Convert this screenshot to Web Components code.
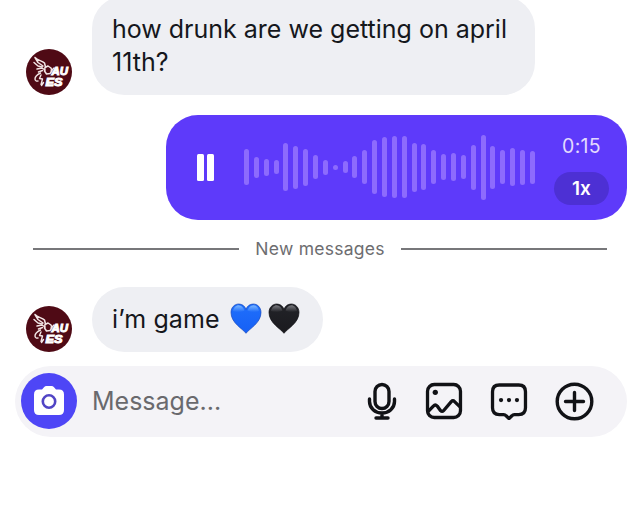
<!DOCTYPE html>
<html lang="en">
<head>
<meta charset="utf-8">
<title>Chat</title>
<style>
    html, body {
        margin: 0;
        height: 100%;
        overflow: hidden;
        background: #fff;
    }
    body {
        font-family: Inter, "Liberation Sans", sans-serif;
        color: #15171c;
    }
</style>
</head>
<body>
<chat-thread>
    <chat-message>how drunk are we getting on april<br>11th?</chat-message>
    <voice-message time="0:15" speed="1x"></voice-message>
    <thread-divider>New messages</thread-divider>
    <chat-message compact>i’m game <heart-emoji color="blue"></heart-emoji><heart-emoji color="black"></heart-emoji></chat-message>
    <message-composer slot="composer" placeholder="Message..."></message-composer>
</chat-thread>

<script>
/**
 * Attach an open shadow root filled with the given markup
 */
function render(element, html) {
    const template = document.createElement('template');
    template.innerHTML = html;
    element.attachShadow({ mode: 'open' });
    element.shadowRoot.appendChild(template.content.cloneNode(true));
}

class ChatThread extends HTMLElement {
    constructor() {
        super();
        render(this, `
<style>
    :host {
        display: flex;
        flex-direction: column;
        width: 640px;
        height: 506px;
    }
    .messages {
        display: flex;
        flex-direction: column;
        /* the first bubble is scrolled slightly out of view */
        margin-top: -4px;
    }
</style>
<div class="messages"><slot></slot></div>
<slot name="composer"></slot>`);
    }
}

class UserAvatar extends HTMLElement {
    constructor() {
        super();
        render(this, `
<style>
    :host { display: block; width: 46px; height: 46px; }
    svg { display: block; }
    text {
        font: italic bold 10px "Liberation Sans", sans-serif;
        fill: #fff;
        stroke: #fff;
        stroke-width: .9px;
    }
</style>
<svg width="46" height="46" viewBox="0 0 46 46">
    <circle cx="23" cy="23" r="23" fill="#4f0a15"/>
    <g fill="none" stroke="#f3e6e6" stroke-linecap="round" stroke-linejoin="round">
        <path d="M9 8.500l3 5 5 3.500M9 8.500c2.500 3 7 3 9.500 5.500l1 4M8 13.500l4 3.500 4 1" stroke-width="1.500"/>
        <path d="M11 20l5-1 3 2M12.500 23l4-1.500" stroke-width="1.500"/>
        <path d="M14.500 24c-3 1.500-5.500 3-5.500 6 0 1.500 1.500 2.500 3 2M15 26l-1.500 3.500 3 .5-1.500 5.500M17.500 33.500l-2 3" stroke-width="1.400"/>
        <path d="M19 18.500l3-1.500 3 2 1 3-2 2.500-3.500.5-2-3z" stroke-width="1.500"/>
        <path d="M25 22l3-3" stroke-width="1.500"/>
    </g>
    <text x="25.500" y="26.300" textLength="16.500" lengthAdjust="spacingAndGlyphs">AU</text>
    <text x="19.500" y="37" textLength="17" lengthAdjust="spacingAndGlyphs">ES</text>
</svg>`);
    }
}

class ChatMessage extends HTMLElement {
    constructor() {
        super();
        render(this, `
<style>
    :host {
        display: flex;
        align-items: flex-end;
        padding-left: 26px;
        gap: 20px;
    }
    .bubble {
        box-sizing: border-box;
        padding: 16.500px 28px 16.500px 20px;
        border-radius: 32.500px;
        background: #eeeff3;
        font-size: 25px;
        line-height: 33px;
        white-space: nowrap;
    }
    :host([compact]) .bubble {
        height: 65px;
        padding: 15.500px 23px 15.500px 20px;
        letter-spacing: .1px;
    }
</style>
<user-avatar></user-avatar>
<div class="bubble"><slot></slot></div>`);
    }
}

class HeartEmoji extends HTMLElement {
    constructor() {
        super();
        const colors = this.getAttribute('color') === 'blue'
            ? ['#1f6ffb', '#1660f5', '#1648bd', '#7db8ff']
            : ['#222328', '#1a1a1e', '#0c0c10', '#7b7c81'];
        render(this, `
<style>
    :host { display: inline-block; width: 32px; height: 31px; margin-left: 3px; margin-right: 3px; vertical-align: -6px; }
    :host(:last-child) { margin-right: 0; }
    svg { display: block; }
</style>
<svg width="32" height="31" viewBox="0 0 32 31">
    <defs>
        <linearGradient id="body" x2="0" y2="1">
            <stop offset="0" stop-color="${colors[0]}"/>
            <stop offset="1" stop-color="${colors[1]}"/>
        </linearGradient>
        <linearGradient id="gloss" x2="0" y2="1">
            <stop offset="0" stop-color="${colors[3]}"/>
            <stop offset="1" stop-color="${colors[3]}" stop-opacity="0"/>
        </linearGradient>
    </defs>
    <path d="M16 30.300C12.500 25.500 1 20 1 9.500 1 4.500 4.500 1 8.700 1c3.600 0 6.300 2.200 7.300 5.500C17 3.200 19.700 1 23.300 1 27.500 1 31 4.500 31 9.500 31 20 19.500 25.500 16 30.300z" fill="url(#body)" stroke="${colors[2]}" stroke-width=".7"/>
    <path d="M3 8c.5-3.500 3-5.800 5.700-5.800S13.500 4.500 14.500 7.500C11 9.500 6 9.500 3 8zM17.500 7.500c1-3 3.100-5.300 5.800-5.300S28.500 4.500 29 8c-3 1.500-8 1.500-11.500-.5z" fill="url(#gloss)"/>
</svg>`);
    }
}

// bar heights of the recorded waveform, left to right
const WAVEFORM = [
    36, 21, 17, 14, 48, 43, 37, 24, 15, 5,
    12, 22, 34, 54, 60, 62, 62, 49, 46, 34,
    26, 28, 24, 45, 65, 43, 34, 38, 35, 33
];

class VoiceMessage extends HTMLElement {
    constructor() {
        super();
        const bars = WAVEFORM.map(height => `<i style="height: ${height}px"></i>`).join('');
        render(this, `
<style>
    :host {
        display: flex;
        align-items: center;
        align-self: flex-end;
        box-sizing: border-box;
        width: 461px;
        height: 105px;
        margin: 19.500px 13px 0 0;
        padding: 0 18px 0 31px;
        border-radius: 32px;
        background: #5e3afa;
        color: #fff;
    }
    .pause { display: flex; gap: 3px; width: 47px; }
    .pause i { width: 7px; height: 27px; border-radius: 1.500px; background: #fff; }
    .wave {
        display: flex;
        align-items: center;
        justify-content: space-between;
        width: 291px;
        height: 66px;
    }
    .wave i { width: 5px; border-radius: 2.500px; background: #8d6bfd; }
    .meta {
        display: flex;
        flex-direction: column;
        align-items: center;
        gap: 14px;
        margin-left: auto;
        padding-top: 4px;
    }
    .time { font-size: 19.500px; line-height: 24px; color: #e3dafe; letter-spacing: .3px; }
    .speed {
        width: 55px;
        height: 33px;
        border-radius: 17px;
        background: #4d30d4;
        font-size: 19px;
        font-weight: 600;
        line-height: 34px;
        text-align: center;
    }
</style>
<div class="pause"><i></i><i></i></div>
<div class="wave">${bars}</div>
<div class="meta">
    <span class="time">${this.getAttribute('time')}</span>
    <span class="speed">${this.getAttribute('speed')}</span>
</div>`);
    }
}

class ThreadDivider extends HTMLElement {
    constructor() {
        super();
        render(this, `
<style>
    :host {
        display: flex;
        align-items: center;
        justify-content: space-between;
        height: 24px;
        margin: 17px 33px 26.500px;
        font-size: 17.500px;
        color: #6d6d70;
        letter-spacing: .25px;
    }
    hr { width: 206px; height: 2px; margin: 0; border: 0; background: #77777a; }
</style>
<hr><slot></slot><hr>`);
    }
}

class MessageComposer extends HTMLElement {
    constructor() {
        super();
        render(this, `
<style>
    :host {
        display: flex;
        align-items: center;
        box-sizing: border-box;
        height: 71px;
        margin: 13.500px 13px 0 15px;
        padding: 0 33.500px 0 6px;
        border-radius: 35.500px;
        background: #f4f3f7;
    }
    .camera {
        display: flex;
        align-items: center;
        justify-content: center;
        width: 56px;
        height: 56px;
        border-radius: 50%;
        background: #4e46f6;
    }
    .placeholder { margin-left: 15px; font-size: 25px; color: #69696d; }
    .actions { display: flex; align-items: center; gap: 26px; margin-left: auto; }
    svg { display: block; }
    .actions svg { fill: none; stroke: #111216; stroke-width: 3.400; stroke-linecap: round; stroke-linejoin: round; }
</style>
<div class="camera">
    <svg width="32" height="32" viewBox="0 0 32 32">
        <path d="M6 4.500h3l2-2.300Q12 1 13.500 1h5Q20 1 21 2.200l2 2.300h3q5 0 5 5V25q0 5-5 5H6q-5 0-5-5V9.500q0-5 5-5z" fill="#fff"/>
        <circle cx="16" cy="16.500" r="6.200" fill="none" stroke="#5145c5" stroke-width="2.600"/>
    </svg>
</div>
<span class="placeholder">${this.getAttribute('placeholder')}</span>
<div class="actions">
    <svg width="30" height="38" viewBox="0 0 30 38">
        <rect x="8" y="2.500" width="14" height="24" rx="7"/>
        <path d="M2.500 17v2.500a12.500 11.500 0 0 0 25 0V17M15 31v5M9 36h12"/>
    </svg>
    <svg width="38" height="38" viewBox="-.600 -.600 39.200 39.200" style="margin-left: 2px">
        <rect x="2" y="2" width="34" height="34" rx="7"/>
        <path d="M2.500 30l5.500-5.800q2-2 4 0l3.500 4.800q1.500 1.600 3 0l8-9.400q1.700-1.700 3.400 0L35.500 25"/>
        <circle cx="10" cy="10" r="2.700" fill="#111216" stroke="none"/>
    </svg>
    <svg width="38" height="38" viewBox="-.600 -.600 39.200 39.200" style="margin-left: 1px">
        <path d="M9 2.500h20q7 0 7 7v16.500q0 7-7 7h-4.500q-1.500 0-2.500 1.200L19 37.200l-3-3q-1-1.200-2.500-1.200H9q-7 0-7-7V9.500q0-7 7-7z"/>
        <g fill="#111216" stroke="none">
            <circle cx="10.800" cy="18" r="2.200"/><circle cx="19" cy="18" r="2.200"/><circle cx="27.200" cy="18" r="2.200"/>
        </g>
    </svg>
    <svg width="39" height="39" viewBox="0 0 39 39" style="margin-left: 1px">
        <circle cx="19.500" cy="19.500" r="17.300"/>
        <path d="M10.500 19.500h18M19.500 10.500v18"/>
    </svg>
</div>`);
    }
}

window.customElements.define('chat-thread', ChatThread);
window.customElements.define('user-avatar', UserAvatar);
window.customElements.define('chat-message', ChatMessage);
window.customElements.define('heart-emoji', HeartEmoji);
window.customElements.define('voice-message', VoiceMessage);
window.customElements.define('thread-divider', ThreadDivider);
window.customElements.define('message-composer', MessageComposer);
</script>
</body>
</html>
